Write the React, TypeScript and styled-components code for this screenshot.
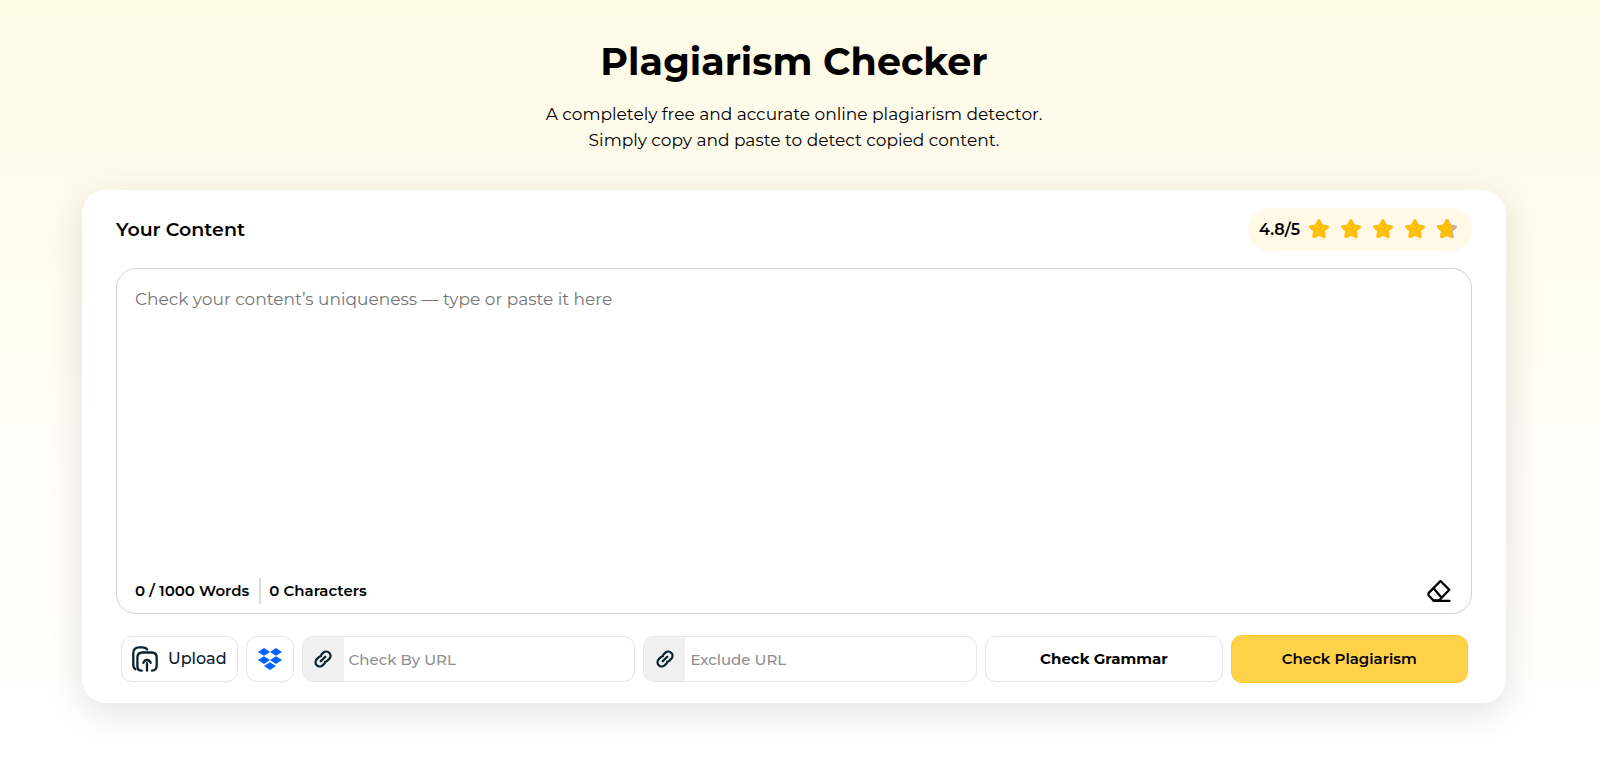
import React, { useState } from 'react';
import styled, { createGlobalStyle, css } from 'styled-components';

const GlobalStyle = createGlobalStyle`
  *, *::before, *::after { box-sizing: border-box; }
  body {
    margin: 0;
    font-family: Montserrat, Inter, "Open Sans", sans-serif;
    color: #000;
    background: #fff;
  }
  button, input, textarea { font: inherit; color: inherit; }
`;

const Page = styled.main`
  min-height: 100vh;
  padding: 36px 94px 66px 82px;
  background: linear-gradient(180deg, #fffae6 0, #fff 92%);
`;

const Intro = styled.header`
  display: flex;
  flex-direction: column;
  align-items: center;
  gap: 13px;
  text-align: center;
`;

const Title = styled.h1`
  margin: 0;
  font-size: 38px;
  line-height: 52px;
  font-weight: 700;
`;

const Lead = styled.p`
  margin: 0;
  font-size: 17px;
  line-height: 26px;
  font-weight: 400;
`;

const Card = styled.section`
  margin-top: 37px;
  padding: 18px 34px 20px;
  border-radius: 24px;
  background: #fff;
  box-shadow: 0 8px 36px rgba(0, 0, 0, 0.12);
`;

const CardHeader = styled.div`
  display: flex;
  align-items: center;
  justify-content: space-between;
`;

const CardTitle = styled.h2`
  margin: 0;
  font-size: 19px;
  line-height: 24px;
  font-weight: 600;
`;

const Rating = styled.div`
  display: flex;
  align-items: center;
  gap: 8px;
  height: 43px;
  padding: 0 14px 0 11px;
  border-radius: 22px;
  background: #fff9e6;
  font-size: 16px;
  line-height: 20px;
  font-weight: 600;
`;

const Stars = styled.div`
  display: flex;
  gap: 10px;
  padding-bottom: 2px;
`;

const Editor = styled.div`
  display: flex;
  flex-direction: column;
  margin-top: 17px;
  border: 1px solid #d3d3cb;
  border-radius: 20px;
  overflow: hidden;
`;

const TextBox = styled.textarea`
  display: block;
  width: 100%;
  height: 300px;
  padding: 17px 18px;
  border: 0;
  outline: 0;
  resize: none;
  background: transparent;
  font-size: 17px;
  line-height: 26px;
  &::placeholder { color: #757575; opacity: 1; }
`;

const EditorFooter = styled.div`
  display: flex;
  align-items: center;
  justify-content: space-between;
  height: 44px;
  padding: 0 20px 0 18px;
`;

const Counts = styled.div`
  display: flex;
  align-items: center;
  font-size: 15px;
  line-height: 26px;
  font-weight: 600;
`;

const Count = styled.span`
  & + & {
    margin-left: 10px;
    padding-left: 8px;
    border-left: 2px solid #dcdcdc;
  }
`;

const ClearButton = styled.button`
  display: flex;
  padding: 0;
  border: 0;
  background: none;
  cursor: pointer;
`;

const Toolbar = styled.div`
  display: flex;
  align-items: center;
  gap: 8px;
  margin: 21px 4px 0 5px;
`;

const outlined = css`
  height: 46px;
  border: 1px solid #e3e7e7;
  border-radius: 11px;
  background: #fff;
`;

const ToolButton = styled.button<{ $iconOnly?: boolean }>`
  ${outlined}
  display: flex;
  align-items: center;
  justify-content: center;
  gap: 10px;
  padding: 0 ${({ $iconOnly }) => ($iconOnly ? 11 : 10)}px;
  color: #0b2230;
  font-size: 16px;
  line-height: 24px;
  font-weight: 500;
  cursor: pointer;
`;

const UrlField = styled.label`
  ${outlined}
  display: flex;
  flex: 334 1 0;
  min-width: 0;
  overflow: hidden;
`;

const UrlIcon = styled.span`
  display: flex;
  align-items: center;
  justify-content: center;
  flex: none;
  width: 41px;
  background: #f0f0f0;
`;

const UrlInput = styled.input`
  flex: 1;
  min-width: 0;
  padding: 0 5px;
  border: 0;
  outline: 0;
  background: transparent;
  font-size: 15px;
  font-weight: 500;
  &::placeholder { color: #8f8f8f; opacity: 1; }
`;

const ActionButton = styled.button<{ $primary?: boolean }>`
  ${outlined}
  flex: 237 1 0;
  padding: 0;
  font-size: 15px;
  line-height: 20px;
  font-weight: 700;
  cursor: pointer;
  ${({ $primary }) => $primary && css`
    height: 48px;
    border-color: #ffca28;
    background: #ffd24a;
    font-weight: 600;
  `}
`;

const STAR = 'M11 1c.7 0 1.200.4 1.500 1l2.200 4.500 4.900.7c1.400.2 1.900 1.700.9 2.700l-3.600 3.400.9 4.900c.2 1.500-1.100 2.400-2.400 1.800L11 17.900 6.600 20c-1.300.6-2.600-.3-2.400-1.800l.9-4.900L1.500 9.900c-1-1-.5-2.500.9-2.700l4.900-.7L9.500 2c.3-.6.8-1 1.500-1z';

const Star = ({ partial }: { partial?: boolean }) => (
  <svg width="22" height="22" viewBox="0 0 22 22" aria-hidden="true">
    <path d={STAR} fill={partial ? '#d3b09a' : '#ffc107'} />
    {partial && (
      <>
        <clipPath id="star-fill"><rect width="15" height="22" /></clipPath>
        <path d={STAR} fill="#ffc107" clipPath="url(#star-fill)" />
      </>
    )}
  </svg>
);

const UploadIcon = () => (
  <svg width="26" height="26" viewBox="0 0 26 26" fill="none" stroke="#0b2230" strokeWidth="2.300" strokeLinecap="round" strokeLinejoin="round" aria-hidden="true">
    <path d="M3.500 23.200C2 22.300 1.300 20.700 1.300 18.500V7.200c0-4 2-5.900 6-5.900h3.300c2.300 0 3.700.8 4.500 2.200" />
    <path d="M9.800 24.700c-3 0-4.400-1.600-4.400-4.800v-8.400c0-3.500 1.500-5 5-5h9.200c3.500 0 5.100 1.600 5.100 5v8.100c0 3.400-1.500 5-4.700 5.100" />
    <path d="M15 24.700v-7.500M11.300 16.800c1-1.900 2.300-2.800 3.700-2.800s2.700.9 3.700 2.800" />
  </svg>
);

const DropboxIcon = () => (
  <svg width="24" height="22" viewBox="0 0 24 22" fill="#0062ff" aria-hidden="true">
    <path d="M6 0l6 3.900-6 3.900-6-3.900zM18 0l6 3.900-6 3.900-6-3.900zM6 8.200l6 3.900L6 16l-6-3.900zM18 8.200l6 3.900-6 3.900-6-3.900zM12 14.200l6 3.900-6 3.900-6-3.900z" />
  </svg>
);

const LinkIcon = () => (
  <svg width="18" height="18" viewBox="0 0 18 18" fill="none" stroke="#0b2230" strokeWidth="2.300" strokeLinecap="round" aria-hidden="true">
    <path d="M6.700 11.300l4.600-4.600" />
    <path d="M7.300 4.700l2.100-2.100a4.250 4.250 0 0 1 6 6L13.300 10.700c-.7.7-1.400 1.100-2.200 1.200" />
    <path d="M10.700 13.300l-2.100 2.100a4.250 4.250 0 0 1-6-6L4.700 7.300c.7-.7 1.400-1.100 2.200-1.200" />
  </svg>
);

const EraserIcon = () => (
  <svg width="24" height="24" viewBox="0 0 24 24" fill="none" stroke="#000" strokeWidth="2.300" strokeLinecap="round" strokeLinejoin="round" aria-hidden="true">
    <path d="M13.500 2l8.800 8.800L13.500 20l-1.500 1.500H6.500L1.500 16.300v-2.200z" />
    <path d="M6.500 9.200l8 9.300M6.500 21.800h16" />
  </svg>
);

const countWords = (text: string) => text.split(/\s+/).filter(Boolean).length;

export default function App() {
  const [text, setText] = useState('');
  return (
    <>
      <GlobalStyle />
      <Page>
        <Intro>
          <Title>Plagiarism Checker</Title>
          <Lead>
            A completely free and accurate online plagiarism detector.
            <br />
            Simply copy and paste to detect copied content.
          </Lead>
        </Intro>
        <Card>
          <CardHeader>
            <CardTitle>Your Content</CardTitle>
            <Rating>
              <span>4.8/5</span>
              <Stars>
                <Star />
                <Star />
                <Star />
                <Star />
                <Star partial />
              </Stars>
            </Rating>
          </CardHeader>
          <Editor>
            <TextBox
              aria-label="Your Content"
              placeholder="Check your content’s uniqueness — type or paste it here"
              value={text}
              onChange={(e) => setText(e.target.value)}
            />
            <EditorFooter>
              <Counts>
                <Count>{countWords(text)} / 1000 Words</Count>
                <Count>{text.length} Characters</Count>
              </Counts>
              <ClearButton type="button" aria-label="Clear text" onClick={() => setText('')}>
                <EraserIcon />
              </ClearButton>
            </EditorFooter>
          </Editor>
          <Toolbar>
            <ToolButton type="button"><UploadIcon />Upload</ToolButton>
            <ToolButton type="button" aria-label="Dropbox" $iconOnly><DropboxIcon /></ToolButton>
            <UrlField>
              <UrlIcon><LinkIcon /></UrlIcon>
              <UrlInput type="url" aria-label="Check By URL" placeholder="Check By URL" />
            </UrlField>
            <UrlField>
              <UrlIcon><LinkIcon /></UrlIcon>
              <UrlInput type="url" aria-label="Exclude URL" placeholder="Exclude URL" />
            </UrlField>
            <ActionButton type="button">Check Grammar</ActionButton>
            <ActionButton type="button" $primary>Check Plagiarism</ActionButton>
          </Toolbar>
        </Card>
      </Page>
    </>
  );
}
